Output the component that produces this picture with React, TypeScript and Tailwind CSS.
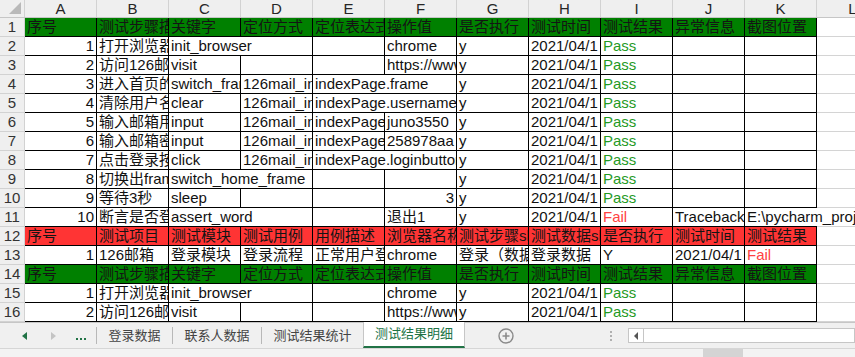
import React from "react";

type Cell = {
  t?: string;
  span?: 1 | 2;
  right?: boolean;
  color?: string;
  bleed?: boolean;
};

const COLS = ["A", "B", "C", "D", "E", "F", "G", "H", "I", "J", "K", "L"];
const DATE = "2021/04/1 10:27:45";

const GREEN_HEAD = ["序号", "测试步骤描述", "关键字", "定位方式", "定位表达式", "操作值", "是否执行", "测试时间", "测试结果", "异常信息", "截图位置"];
const RED_HEAD = ["序号", "测试项目", "测试模块", "测试用例", "用例描述", "浏览器名称", "测试步骤sheet名", "测试数据sheet名", "是否执行", "测试时间", "测试结果"];

const pass: Cell = { t: "Pass", color: "text-[#1f9a1f]" };
const fail: Cell = { t: "Fail", color: "text-[#ff4242]" };
const num = (n: string): Cell => ({ t: n, right: true });

const row2: Cell[] = [num("1"), { t: "打开浏览器" }, { t: "init_browser", span: 2 }, {}, { t: "chrome" }, { t: "y" }, { t: DATE }, pass, {}, {}];
const row3: Cell[] = [num("2"), { t: "访问126邮箱" }, { t: "visit" }, {}, {}, { t: "https://www.126.com" }, { t: "y" }, { t: DATE }, pass, {}, {}];

type RowDef = { cells: Cell[]; bg?: string };

const rows: RowDef[] = [
  { cells: GREEN_HEAD.map((t) => ({ t })), bg: "bg-[#008000]" },
  { cells: row2 },
  { cells: row3 },
  { cells: [num("3"), { t: "进入首页的frame" }, { t: "switch_frame" }, { t: "126mail_indexPage" }, { t: "indexPage.frame", span: 2 }, { t: "y" }, { t: DATE }, pass, {}, {}] },
  { cells: [num("4"), { t: "清除用户名输入框" }, { t: "clear" }, { t: "126mail_indexPage" }, { t: "indexPage.username", span: 2 }, { t: "y" }, { t: DATE }, pass, {}, {}] },
  { cells: [num("5"), { t: "输入邮箱用户名" }, { t: "input" }, { t: "126mail_indexPage" }, { t: "indexPage.username" }, { t: "juno3550" }, { t: "y" }, { t: DATE }, pass, {}, {}] },
  { cells: [num("6"), { t: "输入邮箱密码" }, { t: "input" }, { t: "126mail_indexPage" }, { t: "indexPage.password" }, { t: "258978aa" }, { t: "y" }, { t: DATE }, pass, {}, {}] },
  { cells: [num("7"), { t: "点击登录按钮" }, { t: "click" }, { t: "126mail_indexPage" }, { t: "indexPage.loginbutton", span: 2 }, { t: "y" }, { t: DATE }, pass, {}, {}] },
  { cells: [num("8"), { t: "切换出frame" }, { t: "switch_home_frame", span: 2 }, {}, {}, { t: "y" }, { t: DATE }, pass, {}, {}] },
  { cells: [num("9"), { t: "等待3秒" }, { t: "sleep" }, {}, {}, num("3"), { t: "y" }, { t: DATE }, pass, {}, {}] },
  { cells: [num("10"), { t: "断言是否登录成功" }, { t: "assert_word", span: 2 }, {}, { t: "退出1" }, { t: "y" }, { t: DATE }, fail, { t: "Traceback (most recent call last)" }, { t: "E:\\pycharm_project\\screenshots\\fail.png", bleed: true }] },
  { cells: RED_HEAD.map((t) => ({ t })), bg: "bg-[#ff3434]" },
  { cells: [num("1"), { t: "126邮箱" }, { t: "登录模块" }, { t: "登录流程" }, { t: "正常用户登录" }, { t: "chrome" }, { t: "登录（数据驱动）" }, { t: "登录数据" }, { t: "Y" }, { t: DATE }, fail] },
  { cells: GREEN_HEAD.map((t) => ({ t })), bg: "bg-[#008000]" },
  { cells: row2 },
  { cells: row3 },
];

function Row({ n, def }: { n: number; def: RowDef }) {
  return (
    <div className="flex h-[19px] shrink-0">
      <div className="w-[25px] shrink-0 bg-[#efefef] border-r border-b border-[#d2d2d2] text-center text-[15px] leading-[18px] text-[#333]">
        {n}
      </div>
      {def.cells.map((c, i) => (
        <div
          key={i}
          className={[
            c.span === 2 ? "w-[144px]" : "w-[72px]",
            "shrink-0 h-[19px] border-b border-black whitespace-nowrap text-[15px] leading-[18px]",
            c.bleed ? "relative z-10 overflow-visible" : "border-r overflow-hidden",
            c.right ? "text-right pr-[2px]" : "pl-[2px]",
            c.color ?? (def.bg ? "text-[#141414]" : "text-[#111]"),
            def.bg ?? "",
          ].join(" ")}
        >
          {c.t}
        </div>
      ))}
      <div className="w-[72px] shrink-0 border-r border-b border-[#d4d4d4]" />
    </div>
  );
}

function TabBar() {
  return (
    <div className="flex h-[26px] shrink-0 bg-[#f0f0f0] border-t border-[#c6c6c6] text-[13px] text-[#444]">
      <div className="w-[96px] shrink-0 flex items-center">
        <svg width="6" height="8" viewBox="0 0 6 8" className="ml-[22px]">
          <path d="M5 0 L0 4 L5 8 Z" fill="#217346" />
        </svg>
        <svg width="6" height="8" viewBox="0 0 6 8" className="ml-[23px]">
          <path d="M0 0 L5 4 L0 8 Z" fill="#c4c4c4" />
        </svg>
        <div className="ml-[19px] flex gap-[2px] mt-[6px]">
          <span className="w-[2px] h-[2px] bg-[#217346]" />
          <span className="w-[2px] h-[2px] bg-[#217346]" />
          <span className="w-[2px] h-[2px] bg-[#217346]" />
        </div>
      </div>
      <div className="w-[76px] shrink-0 border-l border-[#b8b8b8] my-[4px] flex items-center justify-center">登录数据</div>
      <div className="w-[89px] shrink-0 border-l border-[#b8b8b8] my-[4px] flex items-center justify-center">联系人数据</div>
      <div className="w-[102px] shrink-0 border-l border-[#b8b8b8] my-[4px] flex items-center justify-center">测试结果统计</div>
      <div className="w-[102px] shrink-0 bg-white border-x border-[#c6c6c6] border-b-2 border-b-[#217346] -mt-px flex items-center justify-center text-[#217346]">
        测试结果明细
      </div>
      <div className="w-[163px] shrink-0 flex items-center">
        <svg width="16" height="16" viewBox="0 0 16 16" className="ml-[33px]">
          <circle cx="8" cy="8" r="7" fill="none" stroke="#8a8a8a" strokeWidth="1.4" />
          <path d="M8 4.5 V11.5 M4.5 8 H11.5" stroke="#8a8a8a" strokeWidth="1.6" />
        </svg>
        <div className="ml-[96px] flex flex-col gap-[2px]">
          <span className="w-[2px] h-[2px] bg-[#b0b0b0]" />
          <span className="w-[2px] h-[2px] bg-[#b0b0b0]" />
          <span className="w-[2px] h-[2px] bg-[#b0b0b0]" />
        </div>
      </div>
      <div className="flex-1 flex items-center">
        <div className="h-[15px] w-full bg-white border border-[#c6c6c6] flex">
          <div className="w-[15px] border-r border-[#c6c6c6] flex items-center justify-center">
            <svg width="5" height="8" viewBox="0 0 5 8">
              <path d="M4 0 L0 4 L4 8 Z" fill="#555" />
            </svg>
          </div>
        </div>
      </div>
    </div>
  );
}

export default function App() {
  return (
    <div className="w-[855px] h-[357px] overflow-hidden bg-white flex flex-col font-['Liberation_Sans','Noto_Sans_CJK_SC',sans-serif]">
      <div className="flex h-[18px] shrink-0 bg-[#efefef] border-b border-[#c6c6c6]">
        <div className="w-[25px] shrink-0 border-r border-[#d2d2d2] relative">
          <svg width="14" height="14" viewBox="0 0 14 14" className="absolute right-[2px] bottom-[2px]">
            <path d="M13 1 L13 13 L1 13 Z" fill="#b9b9b9" />
          </svg>
        </div>
        {COLS.map((c) => (
          <div key={c} className="w-[72px] shrink-0 border-r border-[#d2d2d2] text-center text-[15px] leading-[17px] text-[#262626]">
            {c}
          </div>
        ))}
      </div>
      {rows.map((r, i) => (
        <Row key={i} n={i + 1} def={r} />
      ))}
      <TabBar />
      <div className="flex-1 bg-[#f3f3f3] border-t border-[#d6d6d6] flex">
        <div className="ml-[703px] w-[40px] bg-[#d4d4d4]" />
      </div>
    </div>
  );
}
